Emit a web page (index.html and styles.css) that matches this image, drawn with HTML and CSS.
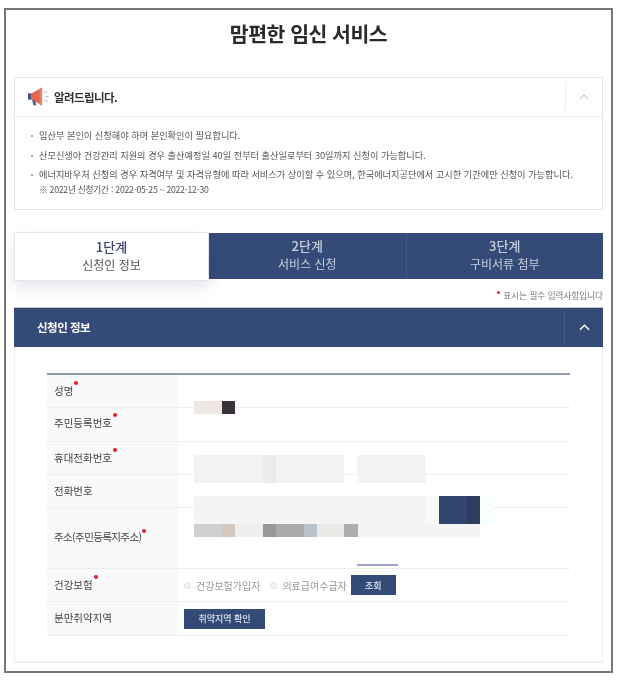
FILE: index.html
```html
<!DOCTYPE html>
<html lang="ko">
<head>
<meta charset="utf-8">
<title>맘편한 임신 서비스</title>
<link rel="stylesheet" href="styles.css">
</head>
<body>
<main class="frame">
  <h1 class="title">맘편한 임신 서비스</h1>
  <section class="notice">
    <header class="notice-head">
      <svg class="horn" viewBox="0 0 24 20" width="22" height="19">
        <path d="M0 6.500h4v7H0z" fill="#46597c"/>
        <path d="M4 6.500l9-5v17l-9-5z" fill="#e2674e"/>
        <path d="M13 .5h2.500v19H13z" fill="#e8836c"/>
        <path d="M4.500 14h3l1.500 5.500H6z" fill="#3f5a8a"/>
        <path d="M18.500 10h4M18 6.500l3-2.500M18 13.500l3 2.500" stroke="#b9c2cc" stroke-width="1.200" fill="none"/>
      </svg>
      <strong class="notice-title">알려드립니다.</strong>
      <span class="notice-toggle">
        <svg viewBox="0 0 12 7" width="10" height="6"><path d="M1 6l5-5 5 5" fill="none" stroke="#b0b0b0" stroke-width="1.200"/></svg>
      </span>
    </header>
    <ul class="notice-list">
      <li>임산부 본인이 신청해야 하며 본인확인이 필요합니다.</li>
      <li>산모신생아 건강관리 지원의 경우 출산예정일 40일 전부터 출산일로부터 30일까지 신청이 가능합니다.</li>
      <li>에너지바우처 신청의 경우 자격여부 및 자격유형에 따라 서비스가 상이할 수 있으며, 한국에너지공단에서 고시한 기간에만 신청이 가능합니다.<br><span class="period">※ 2022년 신청기간 : 2022-05-25 ~ 2022-12-30</span></li>
    </ul>
  </section>
  <nav class="steps">
    <div class="step active"><b>1단계</b><span>신청인 정보</span></div>
    <div class="step"><b>2단계</b><span>서비스 신청</span></div>
    <div class="step"><b>3단계</b><span>구비서류 첨부</span></div>
  </nav>
  <p class="req-note"><i class="dot"></i>표시는 필수 입력사항입니다</p>
  <section class="panel">
    <header class="panel-head">
      <strong>신청인 정보</strong>
      <span class="panel-toggle">
        <svg viewBox="0 0 12 7" width="11" height="7"><path d="M1 6l5-5 5 5" fill="none" stroke="#fff" stroke-width="1.500"/></svg>
      </span>
    </header>
    <div class="panel-body">
      <div class="form">
        <div class="row r1"><div class="label">성명<i class="dot"></i></div><div class="value"></div></div>
        <div class="row r2"><div class="label">주민등록번호<i class="dot"></i></div><div class="value"></div></div>
        <div class="row r3"><div class="label">휴대전화번호<i class="dot"></i></div><div class="value"></div></div>
        <div class="row r4"><div class="label">전화번호</div><div class="value"></div></div>
        <div class="row r5"><div class="label">주소(주민등록지주소)<i class="dot"></i></div><div class="value"></div></div>
        <div class="row r6"><div class="label">건강보험<i class="dot"></i></div>
          <div class="value choices">
            <label class="radio"><i></i>건강보험가입자</label>
            <label class="radio"><i></i>의료급여수급자</label>
            <button class="btn btn-small" type="button">조회</button>
          </div>
        </div>
        <div class="row r7"><div class="label">분만취약지역</div>
          <div class="value"><button class="btn btn-wide" type="button">취약지역 확인</button></div>
        </div>
        <div class="mask m-name"><i class="c1"></i><i class="c2"></i></div>
        <div class="mask m-phone"><i class="p1"></i><i class="p2"></i><i class="p3"></i><i class="p4"></i></div>
        <div class="mask m-addr1"><i class="a1"></i><i class="a2"></i><i class="a3"></i><i class="a4"></i><i class="a5"></i></div>
        <div class="mask m-addr2"><i class="b1"></i><i class="b2"></i><i class="b3"></i><i class="b4"></i><i class="b5"></i><i class="b6"></i><i class="b7"></i><i class="b8"></i><i class="b9"></i></div>
        <div class="mask m-bar"></div>
      </div>
    </div>
  </section>
</main>
</body>
</html>
```
FILE: styles.css
```css
* { box-sizing: border-box; }
html, body { margin: 0; padding: 0; background: #fff; }
body {
  padding: 8px 0 0 4px;
  font-family: "Noto Sans CJK KR", "Noto Sans", sans-serif;
  color: #333;
}
.frame {
  width: 609px;
  height: 665px;
  border: 2px solid #777;
  padding: 0 8px;
  overflow: hidden;
  filter: blur(.35px);
}
.title {
  margin: 0;
  height: 67px;
  padding-top: 6px;
  text-align: center;
  font-size: 20.500px;
  line-height: 35px;
  font-weight: 700;
  color: #2a2a2a;
  letter-spacing: -0.5px;
}
.notice { border: 1px solid #e6e6e6; height: 133px; }
.notice-head {
  display: flex;
  align-items: center;
  height: 39px;
  padding: 0 0 1px 13px;
  border-bottom: 1px solid #eee;
}
.horn { margin-right: 4px; }
.notice-title { font-size: 11.500px; letter-spacing: -0.6px; color: #333; }
.notice-toggle {
  margin-left: auto;
  width: 37px;
  height: 28px;
  display: flex;
  align-items: center;
  justify-content: center;
  border-left: 1px solid #f0f0f0;
}
.notice-list {
  list-style: none;
  margin: 0;
  padding: 11px 0 0 24px;
  font-size: 9.200px;
  line-height: 15px;
  color: #555;
  white-space: nowrap;
}
.notice-list li { position: relative; margin-bottom: 4.500px; }
.notice-list li::before {
  content: "";
  position: absolute;
  left: -8px;
  top: 7px;
  width: 2px;
  height: 2px;
  background: #aaa;
}
.period { font-size: 8.700px; letter-spacing: -0.25px; }
.steps {
  display: flex;
  height: 46px;
  margin-top: 23px;
  background: #344b78;
}
.step {
  flex: 1;
  display: flex;
  flex-direction: column;
  align-items: center;
  justify-content: center;
  padding-bottom: 3px;
  color: #c6cede;
  border-left: 1px solid #43598a;
}
.step:nth-child(2) { border-left: 0; }
.step b { font-size: 13px; line-height: 18px; font-weight: 500; }
.step span { font-size: 12px; line-height: 17px; }
.step.active {
  flex: 0 0 195px;
  background: #fff;
  color: #555;
  height: 49px;
  margin-top: -1px;
  padding-bottom: 2px;
  border: 1px solid #e4e6ee;
  box-shadow: 0 8px 14px rgba(60, 70, 100, .12);
  position: relative;
}
.step.active b { color: #39456a; }
.req-note {
  margin: 0;
  height: 28px;
  padding-top: 9px;
  text-align: right;
  font-size: 8.600px;
  line-height: 15px;
  color: #777;
}
.dot {
  display: inline-block;
  width: 4px;
  height: 4px;
  margin-left: 1px;
  border-radius: 50%;
  background: #e0202a;
  vertical-align: top;
  position: relative;
  top: 0;
}
.req-note .dot { margin: 0 3px 0 0; width: 3px; height: 3px; top: 3px; }
.panel-head {
  display: flex;
  align-items: center;
  height: 40px;
  padding: 0 0 1px 23px;
  background: #344b78;
  color: #fff;
  border-top: 1px solid #bfc5cf;
}
.panel-head strong { font-size: 11.500px; letter-spacing: -0.5px; }
.panel-toggle {
  margin-left: auto;
  width: 39px;
  height: 32px;
  display: flex;
  align-items: center;
  justify-content: center;
  border-left: 1px solid #4a5f8c;
}
.panel-body {
  height: 316px;
  padding: 26px 32px 0;
  border: 1px solid #efefef;
  border-top: 0;
  border-bottom-width: 2px;
}
.form { position: relative; border-top: 2px solid #8f9bae; }
.row { display: flex; border-bottom: 1px solid #eee; height: 34px; }
.r1 { height: 33px; }
.r3, .r4 { height: 33px; }
.r5 { height: 61px; }
.r6 { height: 33px; }
.r7 { height: 34px; }
.label {
  width: 131px;
  background: #f9f9f9;
  padding: 6px 0 0 7px;
  font-size: 10.500px;
  line-height: 20px;
  color: #444;
  white-space: nowrap;
}
.r2 .label { padding-top: 5px; }
.r5 .label { padding-top: 19px; letter-spacing: -0.6px; }
.r5 .dot { top: 2px; }
.value { flex: 1; display: flex; align-items: center; padding-left: 6px; }
.radio {
  display: flex;
  align-items: center;
  margin-right: 10px;
  font-size: 10px;
  color: #999;
}
.radio + .radio { margin-right: 4px; }
.radio i {
  width: 7px;
  height: 7px;
  margin-right: 5px;
  border: 1px solid #ddd;
  border-radius: 50%;
  background: #f4f4f4;
}
.btn {
  border: 0;
  padding: 0;
  height: 20px;
  background: #344b78;
  color: #dfe4ee;
  font: 500 9px "Noto Sans CJK KR", sans-serif;
}
.btn-small { width: 45px; }
.btn-wide { width: 81px; }
.mask { position: absolute; display: flex; height: 13px; }
.mask i { display: block; height: 100%; }
.m-name { left: 147px; top: 26px; }
.c1 { width: 28px; background: #efe6e4; }
.c2 { width: 13px; background: #3b323b; }
.m-phone { left: 147px; top: 80px; height: 28px; }
.p1 { width: 69px; background: #f2f2f2; }
.p2 { width: 13px; background: #ebebeb; }
.p3 { width: 68px; background: #f3f3f3; margin-right: 13px; }
.p4 { width: 69px; background: #f3f3f3; }
.m-addr1 { left: 147px; top: 121px; height: 28px; }
.a1 { width: 232px; background: #f4f4f4; }
.a2 { width: 13px; background: #f8fbf4; }
.a3 { width: 28px; background: #31466f; }
.a4 { width: 13px; background: #2e3c5e; }
.a5 { width: 13px; background: #f8ffff; }
.m-addr2 { left: 147px; top: 149px; }
.b1 { width: 28px; background: #d0d0d0; }
.b2 { width: 13px; background: #d2c8bd; }
.b3 { width: 28px; background: #efefef; }
.b4 { width: 13px; background: #98989c; }
.b5 { width: 28px; background: #aaaaac; }
.b6 { width: 13px; background: #bac2ca; }
.b7 { width: 27px; background: #e9ebe6; }
.b8 { width: 14px; background: #adaeb0; }
.b9 { width: 122px; background: #f4f4f4; }
.m-bar { left: 310px; top: 189px; width: 41px; height: 2px; background: #9aa5c5; }
```
